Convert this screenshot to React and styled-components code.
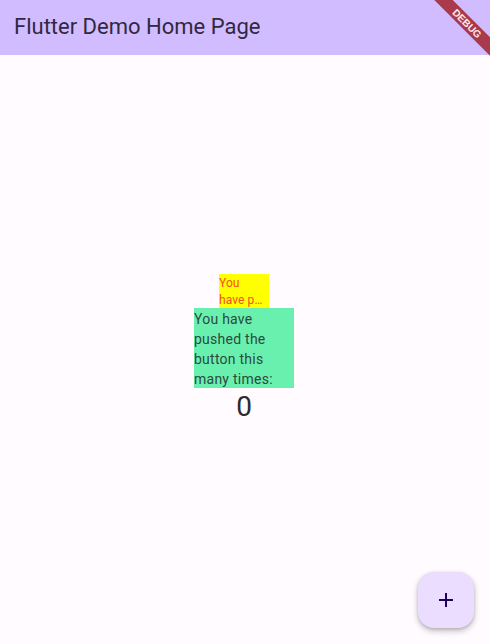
import React from "react";
import styled, { createGlobalStyle } from "styled-components";

const GlobalStyle = createGlobalStyle`
  html, body {
    margin: 0;
    padding: 0;
    height: 100%;
    overflow: hidden;
  }
  #root {
    height: 100%;
  }
`;

const Page = styled.div`
  position: relative;
  display: flex;
  flex-direction: column;
  width: 490px;
  height: 644px;
  overflow: hidden;
  background-color: #fffbfe;
  color: #2c2a30;
  font-family: Roboto, "Liberation Sans", sans-serif;
`;

const AppBar = styled.header`
  display: flex;
  align-items: center;
  flex: 0 0 55px;
  padding: 0 14px 1px;
  background-color: #d0bcff;
  box-sizing: border-box;
`;

const Title = styled.h1`
  margin: 0;
  color: #32283f;
  font-size: 22px;
  font-weight: 400;
  line-height: 28px;
`;

const Body = styled.main`
  flex: 1;
  display: flex;
  flex-direction: column;
  align-items: center;
  justify-content: center;
  padding-right: 2px;
`;

const YellowBox = styled.div`
  box-sizing: border-box;
  width: 50px;
  height: 34px;
  padding-top: 1px;
  background-color: #ffff00;
  color: #f4511e;
  font-size: 12px;
  line-height: 17px;
  letter-spacing: 0.1px;
  white-space: nowrap;
`;

const GreenBox = styled.div`
  box-sizing: border-box;
  width: 100px;
  height: 80px;
  padding-top: 1px;
  background-color: #69f0ae;
  color: #2b4a3f;
  font-size: 14px;
  line-height: 20px;
  letter-spacing: 0.25px;
`;

const Counter = styled.div`
  font-size: 28px;
  line-height: 37px;
`;

const Fab = styled.button`
  position: absolute;
  right: 16px;
  bottom: 16px;
  display: flex;
  align-items: center;
  justify-content: center;
  width: 56px;
  height: 56px;
  padding: 0;
  border: none;
  border-radius: 16px;
  background-color: #eaddff;
  box-shadow: 0 3px 6px rgba(0, 0, 0, 0.25), 0 1px 3px rgba(0, 0, 0, 0.12);
  color: #21005d;
`;

const Ribbon = styled.div`
  position: absolute;
  top: 17px;
  left: 427px;
  width: 80px;
  height: 13px;
  transform: rotate(45deg);
  background-color: #a83a4c;
  color: #ffe8e8;
  font-family: "Liberation Sans", sans-serif;
  font-size: 10px;
  font-weight: 700;
  line-height: 13px;
  text-align: center;
`;

const App = () => {
  return (
    <Page>
      <GlobalStyle />
      <AppBar>
        <Title>Flutter Demo Home Page</Title>
      </AppBar>
      <Body>
        <YellowBox>
          You
          <br />
          have p…
        </YellowBox>
        <GreenBox>You have pushed the button this many times:</GreenBox>
        <Counter>0</Counter>
      </Body>
      <Fab aria-label="Increment">
        <svg width="24" height="24" viewBox="0 0 24 24" fill="currentColor">
          <path d="M19 13h-6v6h-2v-6H5v-2h6V5h2v6h6v2z" />
        </svg>
      </Fab>
      <Ribbon>DEBUG</Ribbon>
    </Page>
  );
};

export default App;
